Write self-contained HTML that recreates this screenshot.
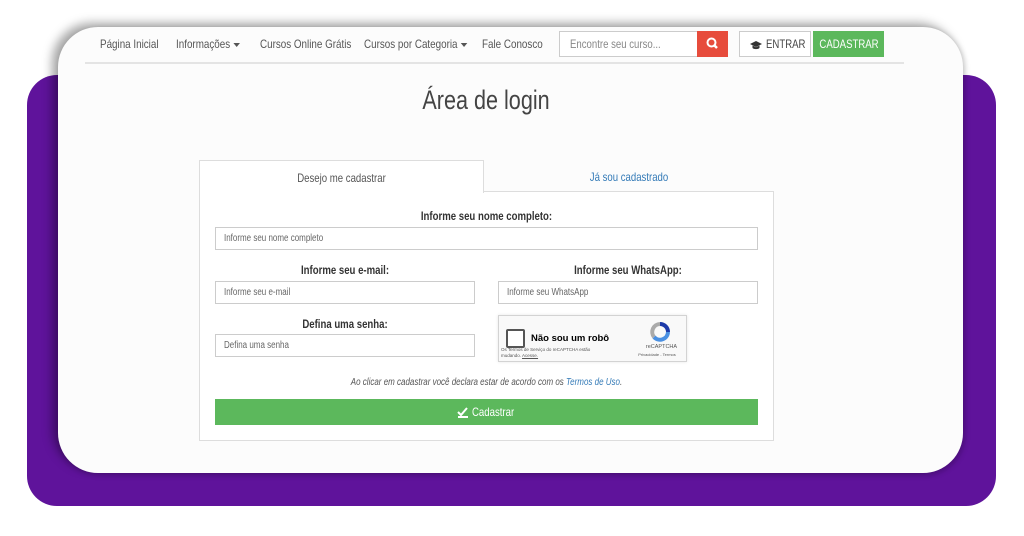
<!DOCTYPE html>
<html><head><meta charset="utf-8"><style>
*{box-sizing:border-box;margin:0;padding:0}
body{width:1024px;height:536px;background:#fff;position:relative;overflow:hidden;font-family:"Liberation Sans",sans-serif;color:#333}
.abs{position:absolute}
.n{display:inline-block;transform:scaleX(.8);transform-origin:left center;white-space:nowrap}
.c{transform:scaleX(.8);transform-origin:center center;white-space:nowrap}
.purple{left:27px;top:75px;width:969px;height:431px;background:#5f139b;border-radius:30px}
.card{left:58px;top:27px;width:905px;height:446px;background:#fcfcfc;border-radius:40px;box-shadow:-6px -4px 10px rgba(0,0,0,.35),2px 2px 6px rgba(0,0,0,.2);overflow:hidden}
.nav{font-size:12px;color:#555;top:37px;white-space:nowrap;transform:scaleX(.82);transform-origin:left center}
.line{left:85px;top:62px;width:819px;height:2px;background:#e4e4e4}
.caret{display:inline-block;border-left:4px solid transparent;border-right:4px solid transparent;border-top:4px solid #555;vertical-align:middle;margin-left:4px}
.inp{border:1px solid #ccc;background:#fff;font-size:10px;color:#666;padding-left:8px;display:flex;align-items:center}
.lbl{font-size:12px;font-weight:bold;color:#333;text-align:center}
</style></head><body>
<div class="abs purple"></div>
<div class="abs card"></div>
<div class="abs nav" style="left:100px">Página Inicial</div>
<div class="abs nav" style="left:176px">Informações<span class="caret"></span></div>
<div class="abs nav" style="left:260px">Cursos Online Grátis</div>
<div class="abs nav" style="left:364px">Cursos por Categoria<span class="caret"></span></div>
<div class="abs nav" style="left:482px">Fale Conosco</div>
<div class="abs inp" style="left:559px;top:31px;width:139px;height:26px;font-size:12px;color:#888;padding-left:10px"><span class="n">Encontre seu curso...</span></div>
<div class="abs" style="left:697px;top:31px;width:31px;height:26px;background:#e74c3c"><svg width="31" height="26"><circle cx="14.5" cy="11.5" r="4" fill="none" stroke="#fff" stroke-width="2"/><line x1="17.5" y1="14.5" x2="20" y2="17" stroke="#fff" stroke-width="2.5"/></svg></div>
<div class="abs" style="left:739px;top:31px;width:72px;height:26px;border:1px solid #ccc;background:#fff;font-size:12px;color:#444">
 <svg class="abs" style="left:9px;top:8px" width="14" height="10"><path d="M1 4L7 1L13 4L7 7Z" fill="#333"/><path d="M3.5 5.5V8C5 9.5 9 9.5 10.5 8V5.5L7 7.3Z" fill="#333"/></svg>
 <span class="abs n" style="left:26px;top:5px">ENTRAR</span></div>
<div class="abs" style="left:813px;top:31px;width:71px;height:26px;background:#5cb85c;color:#fff;font-size:12px;display:flex;align-items:center;justify-content:center"><div class="c">CADASTRAR</div></div>
<div class="abs line"></div>
<div class="abs" style="left:0;width:972px;top:85px;text-align:center;font-size:27px;color:#444"><div class="c">Área de login</div></div>
<div class="abs" style="left:199px;top:191px;width:575px;height:250px;border:1px solid #ddd;background:#fff"></div>
<div class="abs" style="left:199px;top:160px;width:285px;height:33px;border:1px solid #ddd;border-bottom:none;background:#fff;font-size:12px;color:#555;text-align:center;padding-top:10px"><div class="c">Desejo me cadastrar</div></div>
<div class="abs" style="left:484px;top:170px;width:290px;text-align:center;font-size:12px;color:#337ab7"><div class="c">Já sou cadastrado</div></div>
<div class="abs lbl" style="left:215px;width:543px;top:209px"><div class="c">Informe seu nome completo:</div></div>
<div class="abs inp" style="left:215px;top:227px;width:543px;height:23px"><span class="n">Informe seu nome completo</span></div>
<div class="abs lbl" style="left:215px;width:260px;top:263px"><div class="c">Informe seu e-mail:</div></div>
<div class="abs inp" style="left:215px;top:281px;width:260px;height:23px"><span class="n">Informe seu e-mail</span></div>
<div class="abs lbl" style="left:498px;width:260px;top:263px"><div class="c">Informe seu WhatsApp:</div></div>
<div class="abs inp" style="left:498px;top:281px;width:260px;height:23px"><span class="n">Informe seu WhatsApp</span></div>
<div class="abs lbl" style="left:215px;width:260px;top:317px"><div class="c">Defina uma senha:</div></div>
<div class="abs inp" style="left:215px;top:334px;width:260px;height:23px"><span class="n">Defina uma senha</span></div>
<div class="abs" style="left:498px;top:315px;width:189px;height:47px;background:#f9f9f9;border:1px solid #d3d3d3;box-shadow:0 0 3px rgba(0,0,0,.1)">
 <div class="abs" style="left:7px;top:13px;width:19px;height:19px;border:2px solid #555;border-radius:2px;background:#fff"></div>
 <div class="abs" style="left:32px;top:17px;font-size:9.5px;color:#000;font-weight:bold;white-space:nowrap">Não sou um robô</div>
 <div class="abs" style="left:2px;top:31px;font-size:4.5px;color:#555;line-height:6px;white-space:nowrap">Os Termos de Serviço do reCAPTCHA estão<br>mudando. <u>Acesse.</u></div>
 <svg class="abs" style="left:150px;top:5px" width="22" height="22"><path d="M11 3A8 8 0 0 1 19 11" stroke="#1c3aa9" stroke-width="4" fill="none"/><path d="M19 11A8 8 0 0 1 5 16" stroke="#4a90e2" stroke-width="4" fill="none"/><path d="M5 16A8 8 0 0 1 11 3" stroke="#aaa" stroke-width="4" fill="none"/></svg>
 <div class="abs" style="left:140px;top:28px;width:45px;text-align:center;font-size:5.5px;color:#555">reCAPTCHA</div>
 <div class="abs" style="left:128px;top:36px;width:60px;text-align:center;font-size:4px;color:#555">Privacidade - Termos</div>
</div>
<div class="abs" style="left:199px;width:575px;top:377px;text-align:center;font-size:10px;font-style:italic;color:#555"><div class="c">Ao clicar em cadastrar você declara estar de acordo com os <span style="color:#337ab7">Termos de Uso</span>.</div></div>
<div class="abs" style="left:215px;top:399px;width:543px;height:26px;background:#5cb85c;color:#fff;font-size:12px;display:flex;align-items:center;justify-content:center;gap:3px"><svg width="12" height="11"><path d="M1 5L4 8L10 1" stroke="#fff" stroke-width="2" fill="none"/><rect x="1" y="9" width="10" height="2" fill="#fff"/></svg><span class="n" style="margin-right:-8px">Cadastrar</span></div>
</body></html>
